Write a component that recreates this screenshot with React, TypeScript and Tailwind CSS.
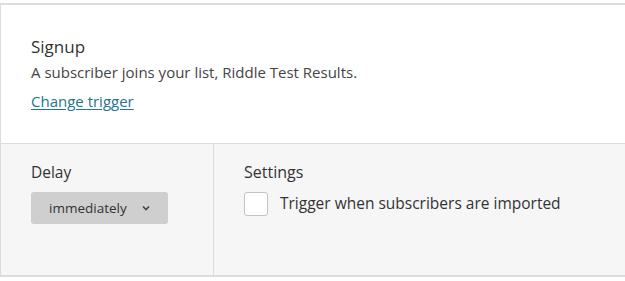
import React from "react";

export default function App() {
  return (
    <div className="w-[625px] h-[281px] bg-white pt-[3px] font-['Open_Sans',sans-serif]">
      <div className="border-l border-t-2 border-b-2 border-[#dcdcdc]">
        {/* Trigger summary */}
        <div className="bg-white pl-[30px] pt-[30px] pb-[30px]">
          <h2 className="text-[17px] leading-[24px] text-[#333]">Signup</h2>
          <p className="mt-[3px] text-[15px] leading-[20px] text-[#444]">
            A subscriber joins your list, Riddle Test Results.
          </p>
          <a href="#" className="mt-[9px] inline-block text-[15px] leading-[20px] text-[#24768a] underline underline-offset-2">
            Change trigger
          </a>
        </div>
        {/* Options */}
        <div className="flex h-[132px] border-t border-[#dcdcdc] bg-[#f6f6f6]">
          <div className="w-[213px] shrink-0 border-r border-[#dcdcdc] pl-[30px] pt-[17px]">
            <div className="text-[15.5px] leading-[22px] text-[#333]">Delay</div>
            <button
              type="button"
              className="mt-[9px] flex h-[32px] w-[137px] items-center rounded-[3px] bg-[#cfcfcf] pl-[18px] text-[13.5px] text-[#333]"
            >
              <span>immediately</span>
              <svg className="ml-[15px]" width="8" height="6" viewBox="0 0 8 6" fill="none">
                <path d="M1 1.5l3 3 3-3" stroke="#444" strokeWidth="1.6" />
              </svg>
            </button>
          </div>
          <div className="pl-[30px] pt-[17px]">
            <div className="text-[16px] leading-[22px] text-[#333]">Settings</div>
            <label className="mt-[9px] flex items-center gap-[12px]">
              <span className="h-[24px] w-[24px] rounded-[3px] border border-[#c4c4c4] bg-white" />
              <span className="text-[15.5px] text-[#333]">Trigger when subscribers are imported</span>
            </label>
          </div>
        </div>
      </div>
    </div>
  );
}
